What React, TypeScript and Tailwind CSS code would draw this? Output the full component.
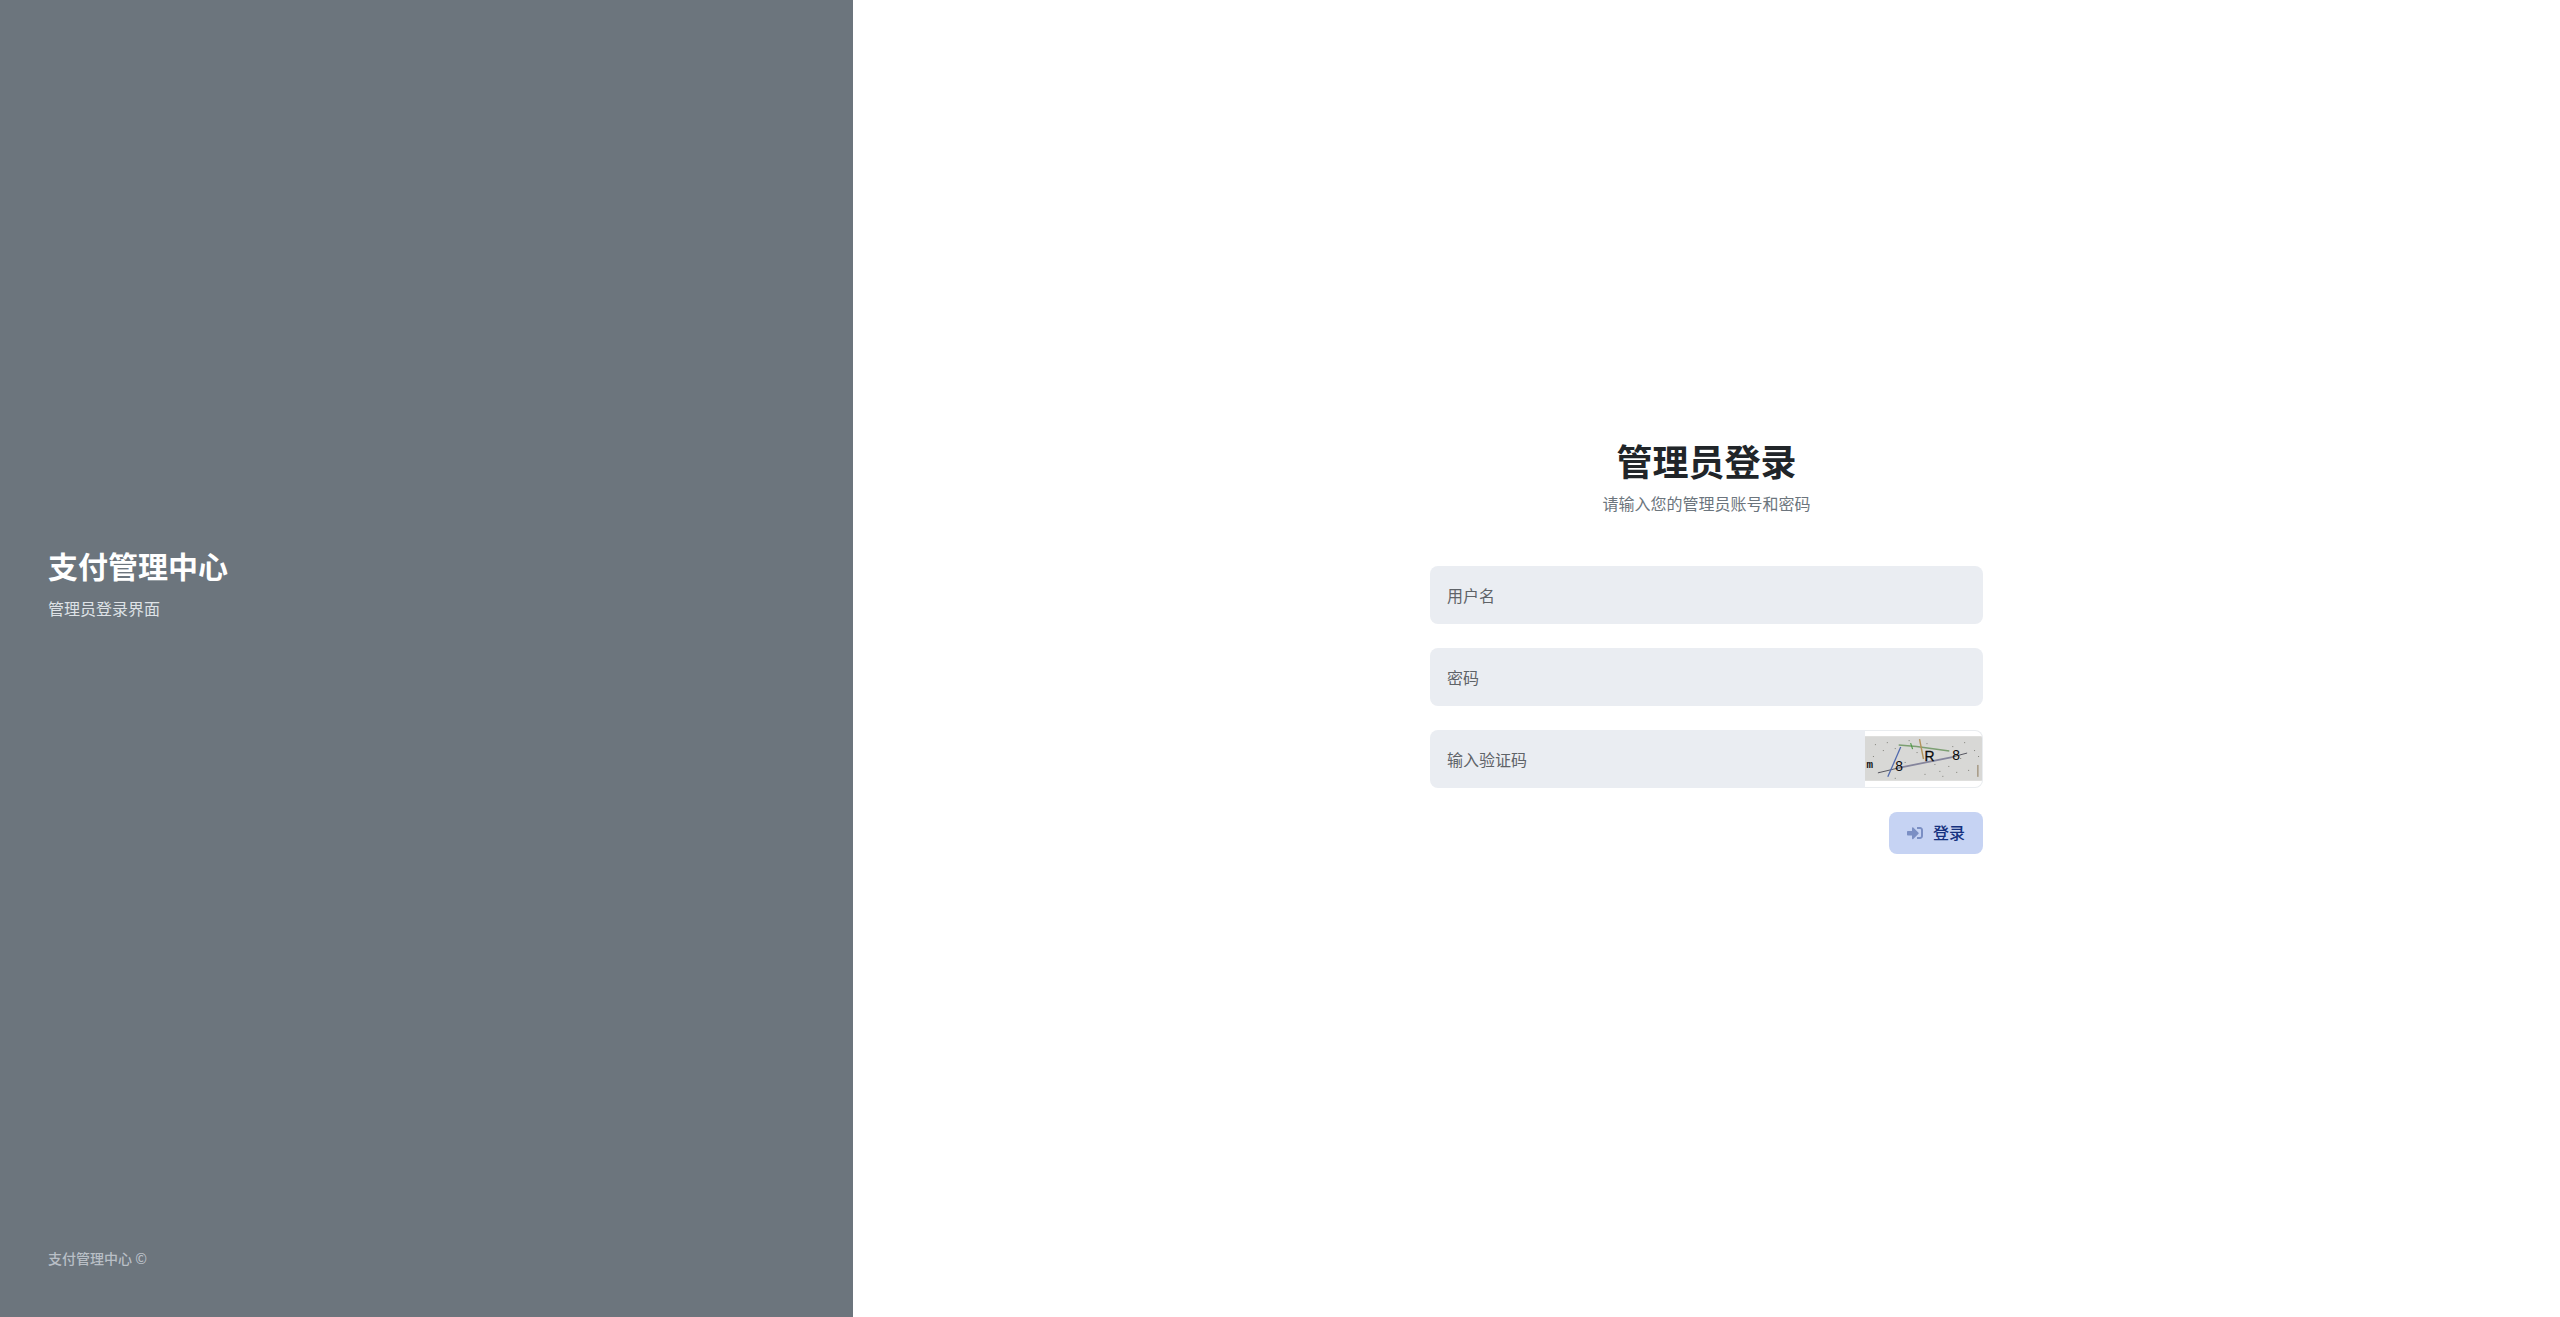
import { FaSignInAlt } from "react-icons/fa";

const font = { fontFamily: '"Noto Sans CJK SC", "Noto Sans", sans-serif' };

function Captcha() {
  const dots = [[10,8],[22,6],[30,12],[44,4],[52,16],[62,7],[70,28],[88,10],[100,6],[110,14],[114,20],[14,36],[30,42],[60,38],[78,40],[92,36],[104,34],[40,26],[8,20],[96,22],[66,12],[84,30],[18,14],[75,35]];
  return (
    <svg width="118" height="45" viewBox="0 0 118 45" className="block">
      <rect width="118" height="45" fill="#d8d8d6" />
      {dots.map(([x, y], i) => (
        <rect key={i} x={x} y={y} width="1" height="1" fill="#80807a" />
      ))}
      <path d="M13 37 L34 32" stroke="#55555f" strokeWidth="1" fill="none" />
      <path d="M34 32 L88 21" stroke="#85859c" strokeWidth="1.8" fill="none" />
      <path d="M88 21 L103 17" stroke="#55555f" strokeWidth="1" fill="none" />
      <path d="M34 9 L52 10.5 L85 15" stroke="#7c9f72" strokeWidth="1.5" fill="none" />
      <path d="M46 7 L48 13" stroke="#4f9a48" strokeWidth="1.2" fill="none" />
      <path d="M55 3 L59 23" stroke="#b2935a" strokeWidth="1.4" fill="none" />
      <path d="M36 11 L23 41" stroke="#5069ad" strokeWidth="1.3" fill="none" />
      <rect x="113" y="29" width="1.6" height="12" fill="#a89c88" />
      <text x="1.5" y="32" fontSize="11" fontWeight="700" fontFamily="Liberation Mono" fill="#111">m</text>
      <text x="30.5" y="35" fontSize="14" fontFamily="Liberation Sans" fill="#0a0a0a">8</text>
      <text x="60" y="25" fontSize="14" fontFamily="Liberation Sans" stroke="#0a0a0a" strokeWidth="0.3" fill="#0a0a0a">R</text>
      <text x="88" y="24" fontSize="14" fontFamily="Liberation Sans" fill="#0a0a0a">8</text>
    </svg>
  );
}

export default function App() {
  const inputCls =
    "w-full h-[58px] bg-[#eaedf2] rounded-lg px-[17px] text-base text-[#212529] placeholder:text-[#5f6368] outline-none";
  return (
    <div style={font} className="flex h-[1317px] w-full bg-white overflow-hidden">
      <aside className="w-[853px] shrink-0 bg-[#6c757d] flex flex-col px-12 pb-12 text-white">
        <div className="flex-1 flex flex-col justify-center pb-[83px]">
          <h2 className="text-[30px] leading-[40px] font-bold m-0">支付管理中心</h2>
          <p className="text-base leading-6 text-[#dee2e6] mt-[11px]">管理员登录界面</p>
        </div>
        <div className="text-sm leading-[21px] font-medium text-[#b9bfc6]">支付管理中心 ©</div>
      </aside>
      <main className="flex-1 flex items-center justify-center pb-[28px]">
        <div className="w-[553px]">
          <div className="text-center mb-[50px]">
            <h1 className="text-4xl leading-[48px] font-bold text-[#212529]">管理员登录</h1>
            <p className="text-base leading-[26px] text-[#6c757d] mt-[6px]">请输入您的管理员账号和密码</p>
          </div>
          <form className="flex flex-col gap-6">
            <input className={inputCls} placeholder="用户名" />
            <input className={inputCls} type="password" placeholder="密码" />
            <div className="flex h-[58px]">
              <input
                className="flex-1 min-w-0 h-full bg-[#eaedf2] rounded-l-lg px-[17px] text-base text-[#212529] placeholder:text-[#5f6368] outline-none"
                placeholder="输入验证码"
              />
              <div className="w-[118px] h-full flex items-center bg-white border-y border-r border-[#e9ecef] rounded-r-lg overflow-hidden">
                <Captcha />
              </div>
            </div>
            <div className="flex justify-end">
              <button
                type="button"
                className="h-[42px] w-[94px] flex items-center justify-center gap-[10px] rounded-lg bg-[#c6d3f3] text-[#15317f] text-base font-medium"
              >
                <FaSignInAlt className="w-4 h-4 text-[#7b8fc4]" />
                <span className="-mt-[2px]">登录</span>
              </button>
            </div>
          </form>
        </div>
      </main>
    </div>
  );
}
